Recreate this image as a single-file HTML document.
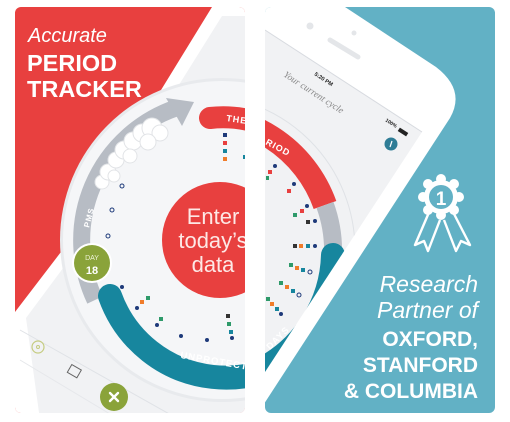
<!DOCTYPE html>
<html><head><meta charset="utf-8"><style>
html,body{margin:0;padding:0;background:#fff;width:510px;height:422px;overflow:hidden}
svg{display:block}
</style></head><body>
<svg width="510" height="422" viewBox="0 0 510 422" xmlns="http://www.w3.org/2000/svg" font-family="Liberation Sans, sans-serif">
<defs>
<clipPath id="cl"><rect x="15" y="7" width="230" height="406" rx="6"/></clipPath>
<clipPath id="cr"><rect x="265" y="7" width="230" height="406" rx="6"/></clipPath>
<clipPath id="scr"><path d="M265 30 L422 132 L265 372 Z"/></clipPath>
</defs>

<!-- LEFT CARD -->
<g clip-path="url(#cl)">
<rect x="15" y="7" width="230" height="406" fill="#e8403f"/>
<path d="M212 7 L260 7 L260 420 L15 420 L15 312 L64 248 Z" fill="#ffffff"/>
<path d="M222 16 L260 16 L260 420 L40 420 L26 318 L72 256 Z" fill="#f1f2f4"/>
<path d="M20 330 L180 420" stroke="#dfe2e6" stroke-width="1" fill="none"/>
<path d="M20 360 L120 420" stroke="#e6e8eb" stroke-width="1" fill="none"/>
<circle cx="222" cy="240" r="162" fill="#e8eaed"/>
<circle cx="222" cy="240" r="159" fill="#f5f6f8"/>
<!-- gray ring -->
<path d="M 95 300 A 140 140 0 0 1 176 108" stroke="#b7bcc4" stroke-width="17" fill="none"/>
<path d="M166 98 L194 102 L182 126 Z" fill="#b7bcc4"/>
<!-- clouds -->
<g fill="#fff" stroke="#e2e4e7" stroke-width="1">
<circle cx="102" cy="182" r="7"/><circle cx="108" cy="172" r="8"/><circle cx="116" cy="160" r="8"/>
<circle cx="124" cy="150" r="9"/><circle cx="133" cy="141" r="9"/><circle cx="142" cy="133" r="9"/>
<circle cx="152" cy="128" r="10"/><circle cx="160" cy="133" r="8"/><circle cx="148" cy="142" r="8"/>
<circle cx="130" cy="156" r="7"/><circle cx="114" cy="176" r="6"/>
</g>
<text x="0" y="0" transform="translate(89,228) rotate(-75)" font-size="8" font-weight="bold" fill="#fff" letter-spacing="1">PMS</text>
<!-- red arc -->
<path d="M 210 118 A 123 123 0 0 1 320 165" stroke="#e8403f" stroke-width="22" stroke-linecap="round" fill="none"/>
<text x="0" y="0" transform="translate(226,121) rotate(8)" font-size="9" font-weight="bold" fill="#fff" letter-spacing="1">THE PERIOD</text>
<!-- teal arc -->
<path d="M 110 296 A 123 123 0 0 0 330 320" stroke="#17869e" stroke-width="24" stroke-linecap="round" fill="none"/>
<text x="0" y="0" transform="translate(180,358) rotate(10)" font-size="9.5" font-weight="bold" fill="#fff" letter-spacing="1">UNPROTECTED</text>
<!-- dots -->
<g>
<rect x="223" y="133" width="4" height="4" fill="#1e3a7a"/><rect x="223" y="141" width="4" height="4" fill="#e8403f"/>
<rect x="223" y="149" width="4" height="4" fill="#17869e"/><rect x="223" y="157" width="4" height="4" fill="#f07c2a"/>
<rect x="243" y="155" width="3" height="4" fill="#17869e"/>
<circle cx="122" cy="186" r="2" fill="none" stroke="#1e3a7a" stroke-width="1"/>
<circle cx="112" cy="210" r="2" fill="none" stroke="#1e3a7a" stroke-width="1"/>
<circle cx="108" cy="236" r="2" fill="none" stroke="#1e3a7a" stroke-width="1"/>
<circle cx="122" cy="287" r="2" fill="#1e3a7a"/><circle cx="137" cy="308" r="2" fill="#1e3a7a"/>
<rect x="140" y="300" width="4" height="4" fill="#f07c2a"/><rect x="146" y="296" width="4" height="4" fill="#2e9a6a"/>
<rect x="159" y="317" width="4" height="4" fill="#2e9a6a"/><circle cx="157" cy="325" r="2" fill="#1e3a7a"/>
<circle cx="181" cy="336" r="2" fill="#1e3a7a"/><circle cx="207" cy="340" r="2" fill="#1e3a7a"/>
<rect x="226" y="314" width="4" height="4" fill="#333"/><rect x="227" y="322" width="4" height="4" fill="#2e9a6a"/>
<rect x="229" y="330" width="4" height="4" fill="#17869e"/><circle cx="232" cy="338" r="2" fill="#1e3a7a"/>
</g>
<!-- red centre -->
<circle cx="220" cy="240" r="58" fill="#e8403f"/>
<g fill="#fde8e6" font-size="22" text-anchor="middle">
<text x="213" y="224">Enter</text><text x="213" y="248">today’s</text><text x="213" y="272">data</text>
</g>
<!-- day -->
<circle cx="92" cy="263" r="20" fill="#fff"/>
<circle cx="92" cy="263" r="18" fill="#8aa33a"/>
<text x="92" y="260" font-size="7" fill="#eef3d8" text-anchor="middle">DAY</text>
<text x="92" y="274" font-size="11" font-weight="bold" fill="#fff" text-anchor="middle">18</text>
<!-- bottom icons -->
<circle cx="38" cy="347" r="6" fill="none" stroke="#c5cc80" stroke-width="1.2"/>
<circle cx="38" cy="347" r="1.5" fill="none" stroke="#c5cc80" stroke-width="1"/>
<rect x="69" y="367" width="11" height="9" fill="none" stroke="#666" stroke-width="1" transform="rotate(30 75 371)"/>
<circle cx="114" cy="397" r="14" fill="#8aa33a"/>
<path d="M110 393 L118 401 M118 393 L110 401" stroke="#fff" stroke-width="2.4" stroke-linecap="round"/>
<!-- headline -->
<text x="28" y="42" font-size="20" font-style="italic" fill="#fff">Accurate</text>
<text x="27" y="71" font-size="23.5" font-weight="bold" fill="#fff">PERIOD</text>
<text x="27" y="97" font-size="23.5" font-weight="bold" fill="#fff">TRACKER</text>
</g>

<!-- RIGHT CARD -->
<g clip-path="url(#cr)">
<rect x="265" y="7" width="230" height="406" fill="#62b1c5"/>
<path d="M345 7 L436 67 Q466 90 450 118 L260 410 L260 7 Z" fill="#ffffff"/>
<path d="M265 30 L422 132 L265 372 Z" fill="#f1f2f4"/>
<path d="M265 30 L422 132" stroke="#d8dbe0" stroke-width="1"/>
<circle cx="310" cy="26" r="3.5" fill="#e4e6e9"/><circle cx="354" cy="33" r="2.5" fill="#e4e6e9"/>
<path d="M330 40 L358 57" stroke="#e4e6e9" stroke-width="5" stroke-linecap="round"/>
<g clip-path="url(#scr)">
<circle cx="200" cy="250" r="155" fill="none" stroke="#dfe2e6" stroke-width="1"/>
<path d="M 188 117 A 133 133 0 0 1 325 205" stroke="#e8403f" stroke-width="24" fill="none"/>
<path d="M 325 205 A 133 133 0 0 1 333 255" stroke="#b7bcc4" stroke-width="18" fill="none"/>
<path d="M 333 255 A 133 133 0 0 1 260 370" stroke="#17869e" stroke-width="24" stroke-linecap="round" fill="none"/>
<text transform="translate(265,144) rotate(28)" font-size="9" font-weight="bold" fill="#fff" letter-spacing="1">RIOD</text>
<text transform="translate(270,350) rotate(-45)" font-size="9" font-weight="bold" fill="#fff" letter-spacing="1">DAYS</text>
<circle cx="225" cy="240" r="35" fill="#e8403f"/>
<g>
<circle cx="275" cy="166" r="2" fill="#1e3a7a"/><rect x="268" y="170" width="4" height="4" fill="#e8403f"/><rect x="266" y="176" width="3" height="4" fill="#2e9a6a"/>
<circle cx="294" cy="184" r="2" fill="#1e3a7a"/><rect x="287" y="189" width="4" height="4" fill="#e8403f"/>
<circle cx="307" cy="206" r="2" fill="#1e3a7a"/><rect x="300" y="209" width="4" height="4" fill="#e8403f"/><rect x="293" y="213" width="4" height="4" fill="#2e9a6a"/>
<rect x="306" y="220" width="4" height="4" fill="#333"/><circle cx="315" cy="221" r="2" fill="#1e3a7a"/>
<rect x="293" y="244" width="4" height="4" fill="#333"/><rect x="299" y="244" width="4" height="4" fill="#f07c2a"/><rect x="306" y="244" width="4" height="4" fill="#17869e"/><circle cx="315" cy="246" r="2" fill="#1e3a7a"/>
<rect x="289" y="263" width="4" height="4" fill="#2e9a6a"/><rect x="295" y="266" width="4" height="4" fill="#f07c2a"/><rect x="301" y="268" width="4" height="4" fill="#17869e"/><circle cx="310" cy="272" r="2" fill="none" stroke="#1e3a7a"/>
<rect x="279" y="281" width="4" height="4" fill="#2e9a6a"/><rect x="285" y="285" width="4" height="4" fill="#f07c2a"/><rect x="291" y="289" width="4" height="4" fill="#17869e"/><circle cx="299" cy="295" r="2" fill="none" stroke="#1e3a7a"/>
<rect x="266" y="297" width="4" height="4" fill="#2e9a6a"/><rect x="270" y="302" width="4" height="4" fill="#f07c2a"/><rect x="275" y="307" width="4" height="4" fill="#17869e"/><circle cx="281" cy="314" r="2" fill="#1e3a7a"/>
</g>
</g>
<text transform="translate(283,76) rotate(33)" font-size="9.5" font-style="italic" fill="#888" font-family="Liberation Serif, serif">Your current cycle</text>
<text transform="translate(314,75) rotate(33)" font-size="5.5" font-weight="bold" fill="#222">5:20 PM</text>
<text transform="translate(385,121) rotate(33)" font-size="5" font-weight="bold" fill="#222">100%</text>
<rect x="398" y="130" width="10" height="4" fill="#222" transform="rotate(33 403 132)"/>
<circle cx="391" cy="144" r="6.5" fill="#2f7d96"/>
<path d="M392 141 L390 147" stroke="#fff" stroke-width="1.2"/>
<!-- ribbon -->
<g fill="none" stroke="#fff" stroke-width="2.4" stroke-linejoin="round">
<path d="M430 210 L415 245 L424 241 L428 251 L440 220"/>
<path d="M452 210 L470 245 L461 241 L456 251 L444 220"/>
</g>
<g fill="#fff">
<circle cx="441" cy="197" r="17"/>
<circle cx="441" cy="179" r="5"/><circle cx="454" cy="184" r="5"/><circle cx="459" cy="197" r="5"/><circle cx="454" cy="210" r="5"/>
<circle cx="441" cy="215" r="5"/><circle cx="428" cy="210" r="5"/><circle cx="423" cy="197" r="5"/><circle cx="428" cy="184" r="5"/>
</g>
<circle cx="441" cy="197" r="12" fill="#62b1c5"/>
<text x="441" y="205" font-size="19" font-weight="bold" fill="#fff" text-anchor="middle">1</text>
<g fill="#fff" text-anchor="end">
<text x="478" y="292" font-size="23" font-style="italic">Research</text>
<text x="478" y="318" font-size="23" font-style="italic">Partner of</text>
<text x="478" y="346" font-size="21" font-weight="bold">OXFORD,</text>
<text x="478" y="372" font-size="21" font-weight="bold">STANFORD</text>
<text x="478" y="398" font-size="21" font-weight="bold">&amp; COLUMBIA</text>
</g>
</g>
</svg>
</body></html>
